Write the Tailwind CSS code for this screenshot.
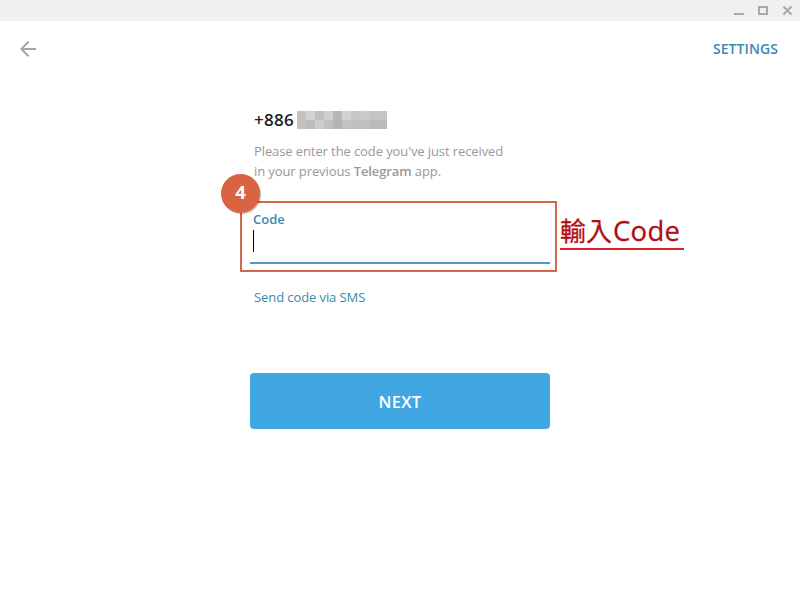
<!DOCTYPE html>
<html lang="zh-Hant">
<head>
<meta charset="utf-8">
<title>Telegram</title>
<script src="https://cdn.jsdelivr.net/npm/@tailwindcss/browser@4"></script>
</head>
<body class="w-[800px] h-[600px] overflow-hidden bg-white font-['Open_Sans','Noto_Sans_CJK_TC',sans-serif]">
<div class="flex h-[21px] items-start justify-end bg-[#f0f0f0]">
  <svg class="h-[21px] w-[72px]" viewBox="0 0 72 21" fill="none" stroke="#a9a9a9" stroke-width="2">
    <path d="M6 14H16M31 7H39V14H31ZM55.5 6.5L63.5 14.5M63.5 6.5L55.5 14.5"/>
  </svg>
</div>
<header class="flex h-14 items-center justify-between pl-5 pr-[22px]">
  <svg class="h-4 w-4" viewBox="0 0 16 16" fill="none" stroke="#a5a5a5" stroke-width="2"><path d="M16 8H1.5M8.5 .8L1.3 8L8.5 15.2"/></svg>
  <a class="text-[14px] font-semibold leading-5 tracking-[0.08px] text-[#3a8ab3]">SETTINGS</a>
</header>
<main class="ml-[250px] w-[300px]">
  <div class="flex h-[64px] items-end pl-1">
    <h1 class="mb-[9px] h-6 w-[43px] text-[17px] font-semibold leading-6 tracking-[0.3px] text-[#222]">+886</h1>
    <div class="mb-3 grid grid-cols-[repeat(10,9px)] grid-rows-[9px_9px]">
      <i class="bg-[#c3c2bf]"></i><i class="bg-[#d2d2d2]"></i><i class="bg-[#c0c0c2]"></i><i class="bg-[#d0d0cf]"></i><i class="bg-[#b7b7b9]"></i><i class="bg-[#d1d4d3]"></i><i class="bg-[#c6c6c6]"></i><i class="bg-[#cacacc]"></i><i class="bg-[#c5c5c4]"></i><i class="bg-[#c5c5c4]"></i>
      <i class="bg-[#c3c2be]"></i><i class="bg-[#bdbdbe]"></i><i class="bg-[#cdcdcf]"></i><i class="bg-[#c2c1be]"></i><i class="bg-[#b4b4b7]"></i><i class="bg-[#c2c2c3]"></i><i class="bg-[#bfbfc1]"></i><i class="bg-[#c0c0c1]"></i><i class="bg-[#bababd]"></i><i class="bg-[#bbbbbd]"></i>
    </div>
  </div>
  <p class="whitespace-nowrap pl-1 text-[13px] leading-5 tracking-[-0.1px] text-[#999]">Please enter the code you've just received<br>in your previous <b class="font-semibold">Telegram</b> app.</p>
  <section class="relative -ml-[10px] mt-5 h-[71px] w-[317px] border-2 border-[#d1684b] px-2">
    <label class="ml-[3px] mt-[6px] block h-[21px] text-[13px] font-semibold leading-5 text-[#3a88b0]">Code</label>
    <div class="h-[34px] w-[300px] border-b-2 border-[#4d9dbc] pl-[3px]"><div class="h-[22px] w-px bg-black"></div></div>
    <div class="absolute -left-[21px] -top-[29px] flex h-[39px] w-[39px] items-center justify-center rounded-full bg-[#da6344] pb-[3px] text-[18.5px] font-bold text-white shadow-[1px_1px_1px_#0004]">4</div>
    <div class="absolute left-[318px] top-[10px] h-[37px] w-[124px] whitespace-nowrap border-b-2 border-[#d8232b] text-[27.5px] leading-[35px] text-[#b10d12] [-webkit-text-stroke:0.3px_#b10d12]"><span class="inline-block w-[53px] text-[26px]">輸入</span><span class="tracking-[0.3px]">Code</span></div>
  </section>
  <a class="ml-1 mt-[15px] block text-[13px] leading-5 tracking-[-0.09px] text-[#2f8cab]">Send code via SMS</a>
  <button class="mt-[66px] block h-14 w-[300px] rounded bg-[#40a7e3] pt-[2px] text-[16.5px] font-semibold tracking-[0.3px] text-white">NEXT</button>
</main>
</body>
</html>
